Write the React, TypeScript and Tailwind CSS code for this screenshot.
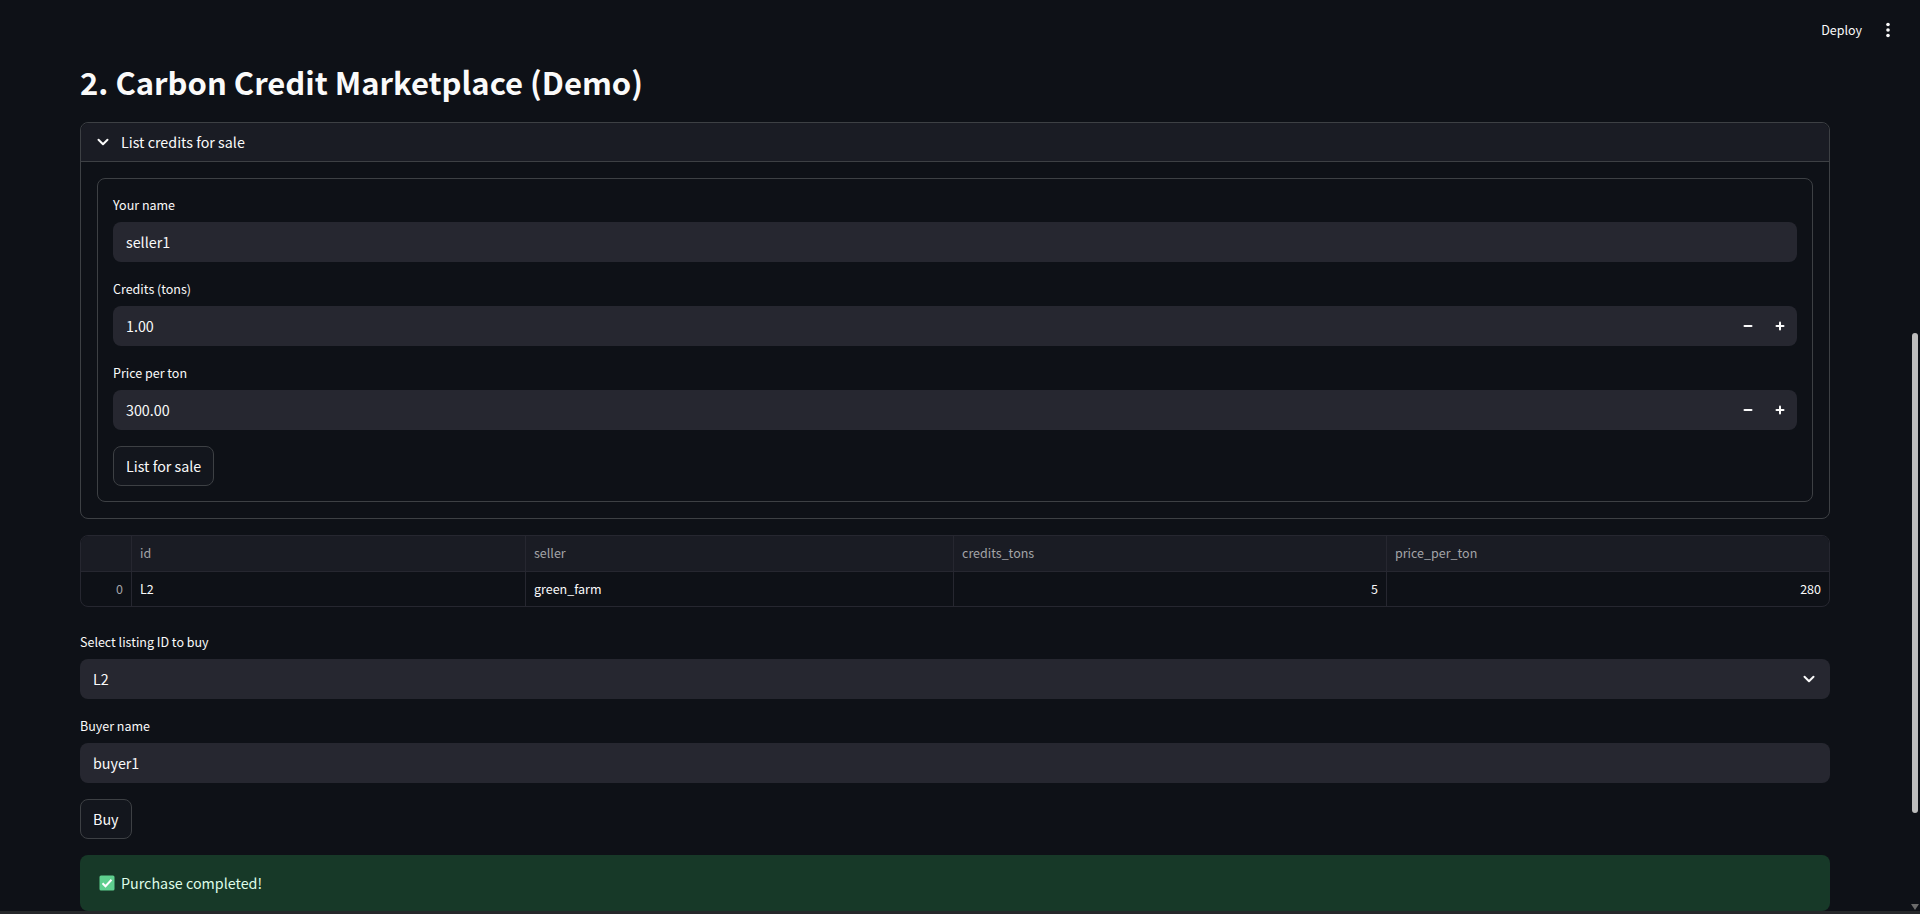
import { ChevronDown, Minus, Plus } from 'lucide-react';

function Label({ text }: { text: string }) {
  return <label className="block h-5 mb-[7px] text-[12.5px] leading-5 text-[#fafafa]">{text}</label>;
}

function TextField({ label, value }: { label: string; value: string }) {
  return (
    <div>
      <Label text={label} />
      <div className="h-10 flex items-center px-[13px] rounded-lg bg-[#262730] text-[14.3px] text-[#fafafa]">{value}</div>
    </div>
  );
}

function NumberField({ label, value }: { label: string; value: string }) {
  return (
    <div>
      <Label text={label} />
      <div className="h-10 flex items-center pl-[13px] pr-px rounded-lg bg-[#262730] text-[14.3px] text-[#fafafa]">
        <span className="flex-1">{value}</span>
        <span className="w-8 flex justify-center"><Minus className="w-[12px] h-[12px]" strokeWidth={4} /></span>
        <span className="w-8 flex justify-center"><Plus className="w-[12px] h-[12px]" strokeWidth={4} /></span>
      </div>
    </div>
  );
}

function Button({ text }: { text: string }) {
  return (
    <button className="h-10 px-[12px] rounded-lg border border-[#3d4044] bg-[#13161d] text-[14.3px] text-[#fafafa]">
      {text}
    </button>
  );
}

const gridCols = 'grid grid-cols-[51px_394px_428px_433px_1fr]';

export default function App() {
  return (
    <div className="relative h-[914px] overflow-hidden bg-[#0e1117] text-[#fafafa] font-['Noto_Sans_CJK_SC',sans-serif]">
      {/* toolbar */}
      <div className="absolute top-0 right-0 h-[60px] flex items-center">
        <span className="text-[12.5px] mr-[23px]">Deploy</span>
        <svg className="mr-[29px]" width="6" height="16" viewBox="0 0 6 16" fill="#fafafa">
          <circle cx="3" cy="2.5" r="1.8" />
          <circle cx="3" cy="8" r="1.8" />
          <circle cx="3" cy="13.5" r="1.8" />
        </svg>
      </div>

      <main className="w-[1750px] ml-20 pt-[62px]">
        <h1 className="h-11 leading-[40px] mb-4 text-[31px] font-semibold">2. Carbon Credit Marketplace (Demo)</h1>

        {/* expander */}
        <div className="h-[397px] rounded-lg border border-[#3d4044]">
          <div className="h-[39px] flex items-center pl-[13px] gap-[9px] bg-[#1a1c24] border-b border-[#3d4044] rounded-t-lg text-[14.3px]">
            <ChevronDown className="w-[18px] h-[18px]" strokeWidth={2.67} />
            <span>List credits for sale</span>
          </div>
          <div className="pt-[16px] px-[16px]">
            <div className="h-[324px] rounded-lg border border-[#3d4044] pt-[16px] px-[15px]">
              <div className="flex flex-col gap-[17px]">
                <TextField label="Your name" value="seller1" />
                <NumberField label="Credits (tons)" value="1.00" />
                <NumberField label="Price per ton" value="300.00" />
              </div>
              <div className="mt-[16px] flex"><Button text="List for sale" /></div>
            </div>
          </div>
        </div>

        {/* dataframe */}
        <div className="mt-[16px] h-[72px] rounded-lg border border-[#262730] text-[12.5px] overflow-hidden">
          <div className={`${gridCols} h-[36px] bg-[#1a1c24] border-b border-[#262730] text-[#a3a4a7]`}>
            <div className="border-r border-[#262730]" />
            <div className="flex items-center px-2 border-r border-[#262730]">id</div>
            <div className="flex items-center px-2 border-r border-[#262730]">seller</div>
            <div className="flex items-center px-2 border-r border-[#262730]">credits_tons</div>
            <div className="flex items-center px-2">price_per_ton</div>
          </div>
          <div className={`${gridCols} h-[34px]`}>
            <div className="flex items-center justify-end px-2 border-r border-[#262730] text-[#a3a4a7]">0</div>
            <div className="flex items-center px-2 border-r border-[#262730]">L2</div>
            <div className="flex items-center px-2 border-r border-[#262730]">green_farm</div>
            <div className="flex items-center justify-end px-2 border-r border-[#262730]">5</div>
            <div className="flex items-center justify-end px-2">280</div>
          </div>
        </div>

        <div className="mt-[25px] flex flex-col gap-[17px]">
          <div>
            <Label text="Select listing ID to buy" />
            <div className="h-10 flex items-center justify-between pl-[13px] pr-[12px] rounded-lg bg-[#262730] text-[14.3px]">
              <span>L2</span>
              <ChevronDown className="w-[18px] h-[18px]" strokeWidth={2.67} />
            </div>
          </div>
          <TextField label="Buyer name" value="buyer1" />
        </div>

        <div className="mt-[16px] flex"><Button text="Buy" /></div>

        <div className="mt-[16px] h-14 flex items-center pl-[19px] gap-[6px] rounded-lg bg-[#173928] text-[14.3px] text-[#dffde9]">
          <svg width="16" height="16" viewBox="0 0 16 16">
            <rect x="0.5" y="0.5" width="15" height="15" rx="1.5" fill="#5fcf8e" />
            <path d="M3.5 8.2l3 3 6-6.4" fill="none" stroke="#fff" strokeWidth="2" />
          </svg>
          <span>Purchase completed!</span>
        </div>
      </main>

      {/* scrollbar */}
      <div className="absolute right-[2px] top-[333px] w-[6px] h-[480px] rounded-full bg-[#bdbdbd]" />
      <div className="absolute right-[1px] top-[904px] w-0 h-0 border-x-[4px] border-t-[6px] border-x-transparent border-t-[#6b6b6b]" />
      <div className="absolute left-0 right-0 bottom-0 h-[3px] bg-[#26282b]" />
    </div>
  );
}
